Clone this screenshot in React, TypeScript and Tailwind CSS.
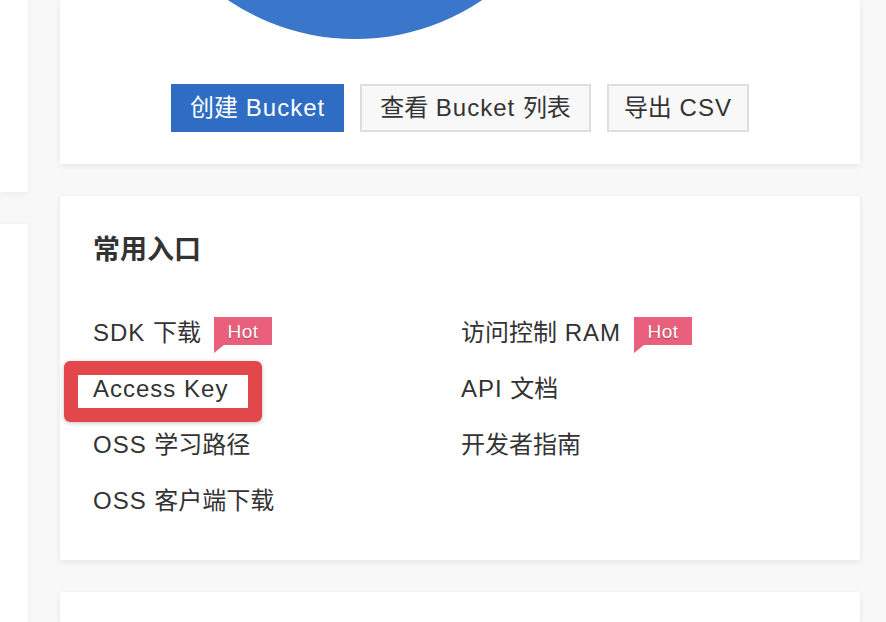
import React from "react";

const font = { fontFamily: '"Liberation Sans", "Noto Sans CJK SC", sans-serif' };

// Latin runs get a little tracking so Arial metrics come closer to the screenshot's Helvetica
const Mixed = ({ text }: { text: string }) => (
    <>
        {text.split(/([\u4e00-\u9fff]+)/).map((part, i) =>
            /[\u4e00-\u9fff]/.test(part) ? (
                <span key={i}>{part}</span>
            ) : (
                <span key={i} className="tracking-[1px]">
                    {part}
                </span>
            )
        )}
    </>
);

const HotTag = () => (
    <span className="relative ml-[13px] -mt-[4px] inline-flex h-[28px] w-[58px] items-center justify-center bg-[#ea607c] text-[19px] leading-none tracking-[0.5px] text-white [text-shadow:0_1px_1px_rgba(0,0,0,0.35)]">
        Hot
        <span className="absolute left-0 top-full h-0 w-0 border-r-[10px] border-t-[8px] border-r-transparent border-t-[#ea607c]" />
    </span>
);

const EntryLink = ({ label, hot }: { label: string; hot?: boolean }) => (
    <div className="flex h-[56px] items-center">
        <a className="text-[24px] leading-none text-[#333]">
            <Mixed text={label} />
        </a>
        {hot && <HotTag />}
    </div>
);

const App = () => {
    return (
        <div className="flex h-[622px] gap-[32px] overflow-hidden bg-[#f8f8f8]" style={font}>
            {/* left column, cut off by the viewport */}
            <div className="flex w-[28px] shrink-0 flex-col gap-[32px]">
                <div className="h-[192px] bg-white shadow-[0_1px_6px_rgba(0,0,0,0.07)]" />
                <div className="flex-1 bg-white shadow-[0_1px_6px_rgba(0,0,0,0.07)]" />
            </div>

            <div className="flex w-[800px] shrink-0 flex-col gap-[32px]">
                {/* bucket card */}
                <div className="h-[164px] bg-white shadow-[0_2px_6px_rgba(0,0,0,0.08)]">
                    <svg width="800" height="40" className="block">
                        <circle cx="295" cy="-188" r="227" fill="#3a76c9" />
                    </svg>
                    <div className="mt-[44px] flex justify-center gap-[16px]">
                        <button className="h-[48px] bg-[#2f6dc4] px-[19px] text-[24px] text-white">
                            <Mixed text="创建 Bucket" />
                        </button>
                        <button className="h-[48px] border-2 border-[#dedede] bg-[#f8f8f8] px-[18px] text-[24px] text-[#333]">
                            <Mixed text="查看 Bucket 列表" />
                        </button>
                        <button className="h-[48px] border-2 border-[#dedede] bg-[#f8f8f8] px-[15px] text-[24px] text-[#333]">
                            <Mixed text="导出 CSV" />
                        </button>
                    </div>
                </div>

                {/* common entries */}
                <div className="relative h-[364px] shrink-0 bg-white px-[33px] pt-[38px] shadow-[0_2px_6px_rgba(0,0,0,0.08)]">
                    <h3 className="h-[32px] text-[27px] font-bold leading-[32px] text-[#333]">常用入口</h3>
                    <div className="mt-[39px] grid grid-cols-[368px_1fr]">
                        <EntryLink label="SDK 下载" hot />
                        <EntryLink label="访问控制 RAM" hot />
                        <EntryLink label="Access Key" />
                        <EntryLink label="API 文档" />
                        <EntryLink label="OSS 学习路径" />
                        <EntryLink label="开发者指南" />
                        <EntryLink label="OSS 客户端下载" />
                    </div>
                    {/* annotation box */}
                    <div className="absolute left-[4px] top-[165px] h-[61px] w-[198px] rounded-[6px] border-[14px] border-[#e2474b] shadow-[0_1px_4px_rgba(0,0,0,0.25)]" />
                </div>

                <div className="flex-1 bg-white shadow-[0_2px_6px_rgba(0,0,0,0.08)]" />
            </div>
        </div>
    );
};

export default App;
